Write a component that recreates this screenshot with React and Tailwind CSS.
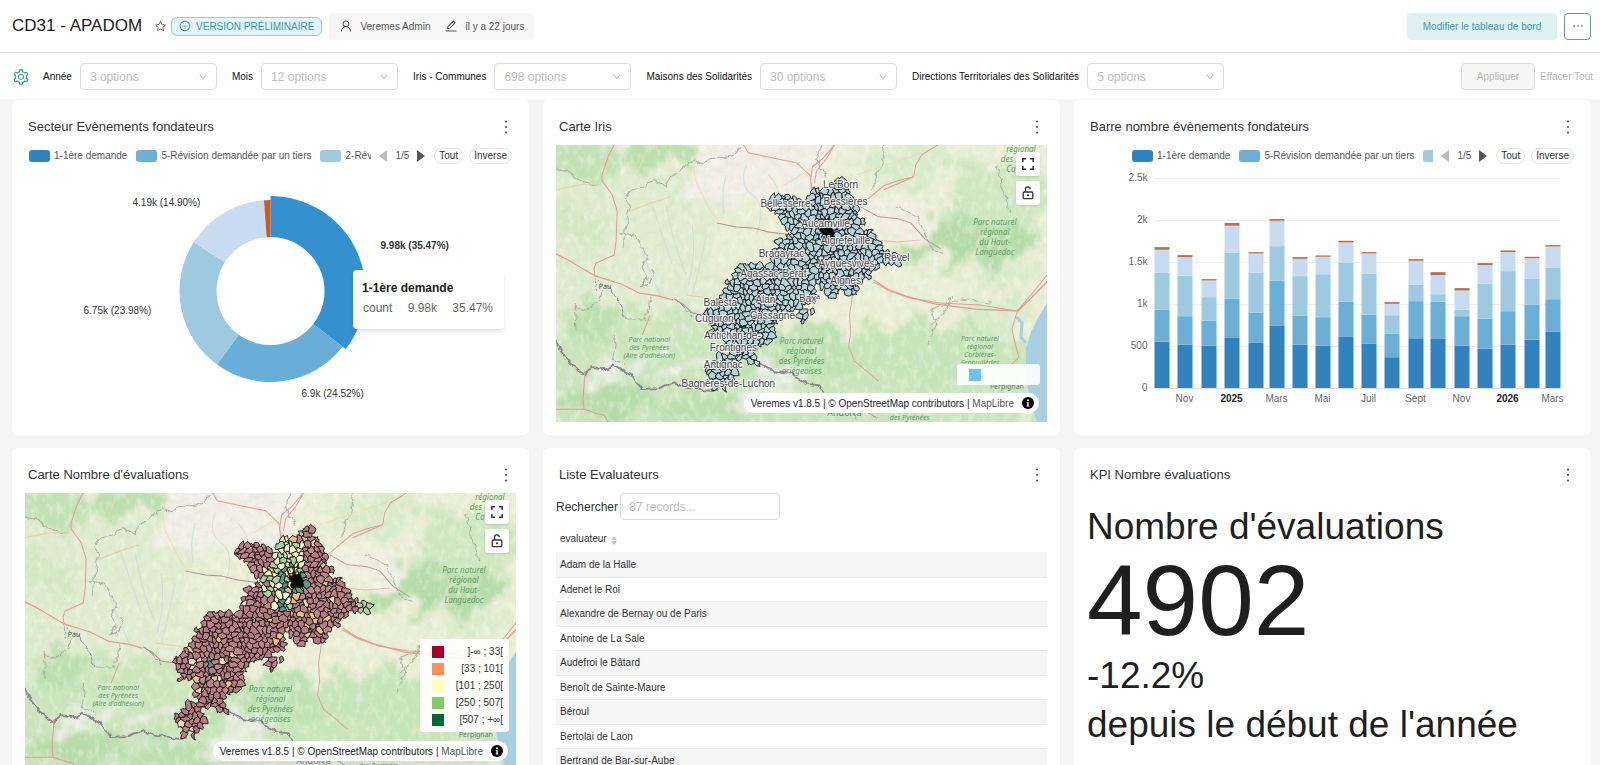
import React, { useState } from 'react';
import {
  AiOutlineStar,
  AiOutlineMinusCircle,
  AiOutlineUser,
  AiOutlineEdit,
  AiOutlineSetting,
  AiOutlineDown,
  AiOutlineEllipsis,
} from 'react-icons/ai';

const filters = [
  { id: 'annee', label: 'Année', placeholder: '3 options' },
  { id: 'mois', label: 'Mois', placeholder: '12 options' },
  { id: 'iris', label: 'Iris - Communes', placeholder: '698 options' },
  { id: 'mds', label: 'Maisons des Solidarités', placeholder: '30 options' },
  { id: 'dts', label: 'Directions Territoriales des Solidarités', placeholder: '5 options' },
];

const evaluateurs = [
  'Adam de la Halle',
  'Adenet le Roi',
  'Alexandre de Bernay ou de Paris',
  'Antoine de La Sale',
  'Audefroi le Bâtard',
  'Benoît de Sainte-Maure',
  'Béroul',
  'Bertolai de Laon',
  'Bertrand de Bar-sur-Aube',
];

const seriesColors = ['#3182bd', '#6baed6', '#9ecae1', '#c6dbef', '#b8704c'];

// cumulative totals for each stacked level
const bars = [
  { x: 67, levels: [552, 934, 1371, 1646, 1677] },
  { x: 90, levels: [517, 855, 1336, 1558, 1582], label: 'Nov' },
  { x: 114, levels: [505, 803, 1081, 1280, 1296] },
  { x: 137, levels: [596, 1061, 1614, 1932, 1964], label: '2025', bold: true },
  { x: 161, levels: [537, 898, 1371, 1602, 1618] },
  { x: 182, levels: [739, 1280, 1689, 1991, 2011], label: 'Mars' },
  { x: 205, levels: [517, 859, 1332, 1538, 1558] },
  { x: 228, levels: [505, 843, 1355, 1562, 1578], label: 'Mai' },
  { x: 251, levels: [608, 1026, 1495, 1733, 1753] },
  { x: 274, levels: [525, 875, 1363, 1602, 1618], label: 'Juil' },
  { x: 297, levels: [366, 644, 867, 1002, 1022] },
  { x: 321, levels: [592, 1034, 1228, 1515, 1534], label: 'Sept' },
  { x: 343, levels: [584, 1026, 1117, 1344, 1379] },
  { x: 367, levels: [505, 855, 934, 1161, 1189], label: 'Nov' },
  { x: 390, levels: [469, 827, 1240, 1463, 1487] },
  { x: 413, levels: [517, 914, 1391, 1618, 1638], label: '2026', bold: true },
  { x: 437, levels: [576, 990, 1304, 1546, 1562] },
  { x: 458, levels: [668, 1057, 1435, 1685, 1701], label: 'Mars' },
];

const slices = [
  { from: 0, to: 127.7, color: '#3490cf', r: 95 },
  { from: 127.7, to: 216, color: '#69aed8', r: 91 },
  { from: 216, to: 302.3, color: '#9ecae1', r: 91 },
  { from: 302.3, to: 355.9, color: '#c9dbf1', r: 91 },
  { from: 355.9, to: 360, color: '#cc5a28', r: 91 },
];

const townLabels = [
  ['Le Born', 284, 39],
  ['Bellesserre', 229, 58],
  ['Bessières', 289, 56],
  ['Aucamville', 269, 78],
  ['Aigrefeuille', 289, 95],
  ['Bragayrac', 225, 108],
  ['Revel', 340, 112],
  ['Ayguesvives', 290, 118],
  ['Agassac', 203, 128],
  ['Bérat', 238, 128],
  ['Aignes', 289, 135],
  ['Baxª', 253, 153],
  ['Alan', 209, 154],
  ['Balesta', 164, 157],
  ['Cassagne', 216, 170],
  ['Cuguron', 158, 173],
  ['Antichan-de-', 176, 190],
  ['Frontignes', 177, 202],
  ['Antignac', 167, 219],
  ['Bagnères-de-Luchon', 172, 238],
];

const parkLabels = [
  { x: 438, y: 80, step: 10, size: 8, lines: ['Parc naturel', 'régional', 'du Haut-', 'Languedoc'] },
  { x: 245, y: 199, step: 10, size: 8, lines: ['Parc naturel', 'régional', 'des Pyrénées', 'ariégeoises'] },
  { x: 93, y: 197, step: 8, size: 7, lines: ['Parc national', 'des Pyrénées', "(Aire d'adhésion)"] },
  { x: 464, y: 7, step: 10, size: 8, lines: ['régional'] },
  { x: 450, y: 17, step: 10, size: 8, lines: ['des'] },
  { x: 454, y: 27, step: 10, size: 8, lines: ['Ca'] },
  { x: 353, y: 275, step: 10, size: 7, lines: ['des Pyrénées'] },
];
const corbieres = { x: 423, y: 196, step: 8, size: 7, lines: ['Parc naturel', 'régional', 'Corbières-', 'Fenouillèdes'] };

const mapLegend = [
  { color: '#a50026', label: ']-∞ ; 33[' },
  { color: '#f4935c', label: '[33 ; 101[' },
  { color: '#ffffbf', label: '[101 ; 250[' },
  { color: '#84ca66', label: '[250 ; 507[' },
  { color: '#006837', label: '[507 ; +∞[' },
];

const mainland = [
  [222, 98], [260, 86], [308, 82], [328, 105], [344, 118], [350, 104], [354, 74], [375, 62], [395, 56],
  [415, 50], [436, 30], [456, 34], [464, 62], [476, 85], [494, 105], [502, 130], [500, 148], [520, 160], [504, 180],
  [508, 190], [545, 202], [564, 228], [592, 250], [606, 262], [625, 246], [638, 250], [634, 290], [600, 294], [580, 306],
  [564, 292], [548, 305], [532, 335], [500, 350], [490, 380], [460, 374], [430, 372], [428, 392], [405, 398],
  [398, 370], [385, 352], [372, 352], [378, 382], [380, 398], [350, 406], [344, 425], [358, 440], [342, 464],
  [320, 450], [318, 424], [300, 436], [272, 444], [252, 460], [250, 505], [236, 524], [208, 524], [194, 548],
  [200, 594], [165, 584], [118, 580], [108, 548], [96, 520], [92, 494], [72, 502], [64, 478], [36, 440],
  [54, 412], [80, 396], [86, 368], [106, 341], [136, 316], [150, 290], [200, 290], [240, 304], [250, 288],
  [250, 252], [266, 228], [298, 211], [316, 198], [296, 194], [264, 168], [256, 142], [234, 128],
];
const luchonnais = [[84, 566], [108, 570], [124, 586], [130, 620], [122, 658], [66, 660], [66, 634], [38, 620], [42, 594], [72, 592]];

const inside = (x, y, poly) => {
  let hit = false;
  for (let i = 0, j = poly.length - 1; i < poly.length; j = i++) {
    const [xi, yi] = poly[i];
    const [xj, yj] = poly[j];
    if (yi > y !== yj > y && x < ((xj - xi) * (y - yi)) / (yj - yi) + xi) hit = !hit;
  }
  return hit;
};

const noise = (a, b, s) => {
  const v = Math.sin(a * 127.1 + b * 311.7 + s * 74.7) * 43758.5453;
  return v - Math.floor(v);
};

const seed = (r, c) => [
  c * 17 + (r % 2 ? 8 : 0) + (noise(r, c, 1) - 0.5) * 21,
  r * 15 + (noise(r, c, 2) - 0.5) * 19,
];

const corner = (a, b, c) => {
  const k = a[0] + b[0] + c[0];
  const l = a[1] + b[1] + c[1];
  return [k / 3 + (noise(Math.round(k), Math.round(l), 3) - 0.5) * 6, l / 3 + (noise(Math.round(k), Math.round(l), 4) - 0.5) * 6];
};

// jagged edge, the same from both sides
const wiggle = (p, q) => {
  const mx = (p[0] + q[0]) / 2;
  const my = (p[1] + q[1]) / 2;
  const a = Math.round(mx * 10);
  const b = Math.round(my * 10);
  return [mx + (noise(a, b, 5) - 0.5) * 8, my + (noise(a, b, 6) - 0.5) * 8];
};

const classColor = (x, y, n) => {
  const d = Math.hypot(x - 395, y - 195);
  if (Math.hypot(x - 362, y - 275) < 16 || Math.hypot(x - 145, y - 440) < 9) return '#5f9a86';
  if (x > 596) return '#b3cfa0';
  if (d < 42) return n < 0.5 ? '#5f9a86' : n < 0.8 ? '#a3cfa0' : '#e9ecbe';
  if (x < 425 && x > 340 && y < 175) return n < 0.65 ? '#edf0c8' : n < 0.8 ? '#e9bd8c' : '#a9d2a2';
  if (d < 95 && x < 400 && y > 160) return n < 0.45 ? '#edf0c8' : n < 0.65 ? '#a9d2a2' : n < 0.85 ? '#e9bd8c' : '#b97f80';
  if (x > 310 && x < 480 && y > 270 && n > 0.78) return '#e9bd8c';
  return n > 0.97 ? '#edd9bb' : n > 0.94 ? '#e9bd8c' : n > 0.5 ? '#bd8587' : '#b57d80';
};

const communes = [];
for (let r = 1; r < 46; r++) {
  for (let c = 1; c < 39; c++) {
    const s = seed(r, c);
    if (!inside(s[0], s[1], mainland) && !inside(s[0], s[1], luchonnais)) continue;
    const o = r % 2 ? 1 : 0;
    const ring = [
      seed(r, c + 1),
      seed(r + 1, c + o),
      seed(r + 1, c + o - 1),
      seed(r, c - 1),
      seed(r - 1, c + o - 1),
      seed(r - 1, c + o),
    ];
    const corners = ring.map((p, i) => corner(s, p, ring[(i + 1) % 6]));
    const pts = corners.flatMap((p, i) => [p, wiggle(p, corners[(i + 1) % 6])]);
    communes.push({
      key: `${r}-${c}`,
      d: `M${pts.map((p) => `${p[0].toFixed(1)} ${p[1].toFixed(1)}`).join('L')}Z`,
      color: classColor(s[0], s[1], noise(r, c, 7)),
    });
  }
}

const arc = (cx, cy, inner, { from, to, r }) => {
  const pt = (radius, deg) => {
    const a = ((deg - 90) * Math.PI) / 180;
    return `${(cx + radius * Math.cos(a)).toFixed(2)} ${(cy + radius * Math.sin(a)).toFixed(2)}`;
  };
  return `M${pt(r, from)}A${r} ${r} 0 0 1 ${pt(r, to)}L${pt(inner, to)}A${inner} ${inner} 0 0 0 ${pt(inner, from)}Z`;
};

const Card = ({ title, children }) => (
  <section className="bg-white rounded-md px-[13px] pb-[13px] min-w-0">
    <div className="h-[45px] pt-[9px] pl-[3px] pr-1 flex items-center justify-between">
      <h2 className="text-[13px] leading-5 text-[#333]">{title}</h2>
      <button aria-label="Options" className="w-3 h-5 flex items-center justify-center">
        <svg width="4" height="14" viewBox="0 0 4 14" fill="#555">
          <circle cx="2" cy="1.5" r="1.1" />
          <circle cx="2" cy="7" r="1.1" />
          <circle cx="2" cy="12.5" r="1.1" />
        </svg>
      </button>
    </div>
    {children}
  </section>
);

const LegendItem = ({ swatch, label }) => (
  <span className="flex shrink-0 items-center gap-1">
    <span className={`w-[21px] h-3 rounded-[3px] ${swatch}`}></span>
    {label}
  </span>
);

const Legend = ({ children }) => (
  <div className="h-[22px] flex items-center text-[10px] leading-4 text-[#555] whitespace-nowrap pr-1">
    <div className="flex-1 min-w-0 overflow-hidden flex gap-[9px]">{children}</div>
    <button aria-label="Précédent" className="ml-2">
      <svg width="8" height="12" viewBox="0 0 8 12"><path d="M8 0v12L0 6z" fill="#bbb" /></svg>
    </button>
    <span className="mx-2">1/5</span>
    <button aria-label="Suivant">
      <svg width="8" height="12" viewBox="0 0 8 12"><path d="M0 0v12l8-6z" fill="#555" /></svg>
    </button>
    <button className="ml-[9px] h-4 px-1 leading-[14px] rounded-full border border-[#e4e4e4] text-[#333]">Tout</button>
    <button className="ml-1.5 h-4 px-1 leading-[14px] rounded-full border border-[#e4e4e4] text-[#333]">Inverse</button>
  </div>
);

const Donut = () => (
  <div className="relative h-[277px]">
    <Legend>
      <span className="w-1 -mr-[9px] shrink-0"></span>
      <LegendItem swatch="bg-[#3182bd]" label="1-1ère demande" />
      <LegendItem swatch="bg-[#6baed6]" label="5-Révision demandée par un tiers" />
      <LegendItem swatch="bg-[#9ecae1]" label="2-Rév" />
    </Legend>
    <svg viewBox="0 22 490 255" className="w-full h-[255px] text-[10px]" fill="#333">
      {slices.slice(1).concat(slices[0]).map((s) => (
        <path key={s.color} d={arc(245, 146, 54, s)} fill={s.color} />
      ))}
      <text x="355" y="104" fontWeight="bold">9.98k (35.47%)</text>
      <text x="107" y="61">4.19k (14.90%)</text>
      <text x="58" y="169">6.75k (23.98%)</text>
      <text x="276" y="252">6.9k (24.52%)</text>
    </svg>
    <div className="absolute left-[328px] top-[125px] w-[151px] h-[59px] bg-white rounded-sm shadow-md px-[9px] pt-2 text-[12px] leading-5">
      <div className="font-bold text-[#222]">1-1ère demande</div>
      <div className="flex justify-between text-[#666] pl-px pr-[2px]">
        <span>count</span>
        <span>9.98k</span>
        <span>35.47%</span>
      </div>
    </div>
  </div>
);

const BarChart = () => {
  const toY = (v) => 243 - (v * 210) / 2500;
  return (
    <div className="h-[277px]">
      <Legend>
        <span className="w-[45px] -mr-[9px] shrink-0"></span>
        <LegendItem swatch="bg-[#3182bd]" label="1-1ère demande" />
        <LegendItem swatch="bg-[#6baed6]" label="5-Révision demandée par un tiers" />
        <LegendItem swatch="bg-[#9ecae1]" label="" />
      </Legend>
      <svg viewBox="0 22 490 255" className="w-full h-[255px] text-[10px]" fill="#666">
        {[0, 500, 1000, 1500, 2000, 2500].map((v) => (
          <g key={v}>
            <path d={`M67 ${toY(v) + 0.5}H473`} stroke={v ? '#eeeeee' : '#dddddd'} />
            <text x="60" y={toY(v) + 3} textAnchor="end">
              {v >= 1000 ? `${v / 1000}k` : v}
            </text>
          </g>
        ))}
        {bars.map((bar) => (
          <g key={bar.x}>
            {bar.levels.map((v, i) => {
              const base = i ? bar.levels[i - 1] : 0;
              return (
                <rect key={i} x={bar.x} y={toY(v)} width="15" height={toY(base) - toY(v)} fill={seriesColors[i]} />
              );
            })}
            {bar.label && (
              <text
                x={bar.x + 7}
                y="257"
                textAnchor="middle"
                fontWeight={bar.bold ? 'bold' : 'normal'}
                fill={bar.bold ? '#222' : '#666'}
              >
                {bar.label}
              </text>
            )}
          </g>
        ))}
      </svg>
    </div>
  );
};

const BaseMap = ({ id, parks }) => (
  <>
    <defs>
      <filter id={`${id}-forest`} x="-20%" y="-20%" width="140%" height="140%">
        <feTurbulence type="fractalNoise" baseFrequency="0.04" numOctaves="5" seed="4" result="n" />
        <feDisplacementMap in="SourceGraphic" in2="n" scale="60" xChannelSelector="R" yChannelSelector="G" />
        <feGaussianBlur stdDeviation="2.5" />
      </filter>
      <filter id={`${id}-relief`} x="0" y="0" width="100%" height="100%">
        <feTurbulence type="fractalNoise" baseFrequency="0.11 0.13" numOctaves="5" seed="11" />
        <feColorMatrix values="0 0 0 0 0.5  0 0 0 0 0.74  0 0 0 0 0.45  2.8 0 0 0 -1.25" />
      </filter>
      <filter id={`${id}-light`} x="0" y="0" width="100%" height="100%">
        <feTurbulence type="fractalNoise" baseFrequency="0.16 0.09" numOctaves="4" seed="23" />
        <feColorMatrix values="0 0 0 0 0.97  0 0 0 0 0.97  0 0 0 0 0.9  0 3 0 0 -1.4" />
      </filter>
      <filter id={`${id}-rough`} x="-5%" y="-5%" width="110%" height="110%">
        <feTurbulence type="fractalNoise" baseFrequency="0.12" numOctaves="2" seed="8" result="n" />
        <feDisplacementMap in="SourceGraphic" in2="n" scale="7" xChannelSelector="R" yChannelSelector="G" />
      </filter>
    </defs>
    <rect width="490" height="277" fill="#eaeed6" />
    <g filter={`url(#${id}-forest)`} fill="#c3e1b5">
      <rect x="-20" y="30" width="150" height="190" fill="#dfebcf" />
      <rect x="60" y="60" width="110" height="110" fill="#e3ecd2" />
      <rect x="135" y="-20" width="130" height="80" fill="#f1efe6" />
      <rect x="300" y="55" width="70" height="40" fill="#f1efe2" />
      <ellipse cx="300" cy="180" rx="80" ry="22" fill="#eceed6" />
      <rect x="-20" y="195" width="500" height="100" fill="#cbe4bc" />
      <ellipse cx="30" cy="16" rx="38" ry="20" />
      <ellipse cx="100" cy="6" rx="34" ry="18" fill="#bddfae" />
      <ellipse cx="20" cy="80" rx="40" ry="18" fill="#d6e9c6" />
      <ellipse cx="425" cy="88" rx="58" ry="34" fill="#b7dcaa" />
      <ellipse cx="390" cy="108" rx="48" ry="10" fill="#b3daa6" />
      <ellipse cx="350" cy="20" rx="40" ry="22" fill="#d9ebcc" />
      <ellipse cx="445" cy="50" rx="50" ry="36" fill="#cfe8c2" />
      <ellipse cx="445" cy="128" rx="50" ry="10" fill="#dfecce" />
      <ellipse cx="90" cy="185" rx="100" ry="24" fill="#cde6be" />
      <ellipse cx="40" cy="180" rx="26" ry="20" fill="#bddfb0" />
      <ellipse cx="245" cy="205" rx="74" ry="28" fill="#c0e1b3" />
      <ellipse cx="370" cy="210" rx="80" ry="32" fill="#c6e4b9" />
      <ellipse cx="440" cy="172" rx="40" ry="18" fill="#d8ebca" />
      <ellipse cx="50" cy="258" rx="50" ry="18" fill="#b7dca9" />
      <ellipse cx="150" cy="264" rx="70" ry="12" fill="#bedfb0" />
      <ellipse cx="130" cy="220" rx="34" ry="6" fill="#eef0e8" />
      <ellipse cx="225" cy="230" rx="26" ry="8" fill="#eef0ec" />
      <ellipse cx="60" cy="226" rx="26" ry="6" fill="#e9efe2" />
      <ellipse cx="210" cy="250" rx="34" ry="9" fill="#e9eee2" />
    </g>
    <rect width="490" height="277" filter={`url(#${id}-relief)`} opacity="0.22" />
    <rect width="490" height="277" filter={`url(#${id}-light)`} opacity="0.36" />
    <path d="M490 158l-9 15-7 14-5 16v30l4 20 7 24h10z" fill="#a9cfe2" />
    <path d="M460 172l5 6-1 14 5 6" fill="none" stroke="#a9cfe2" strokeWidth="3" />
    <g fill="none" strokeLinejoin="round" filter={`url(#${id}-rough)`}>
      <path
        d="M185 0l-8 10-22 4-10 5-8-4-12 10-10 6-6 10-10-6-8 2-2 6-14 2-6 8 4 12-4 18-2 20M65 89l14 2 8 12 4 10-6 12 6 8-6 10 8-6 4-14M46 146l-2 8-14 12-12-6 2 24M58 190l2 10-4 14 12 4M70 174h20l4-22M265 0l-6 12 10 20M328 0l-3 22-6 8-3 14M370 200l10-22-6-14 30-10 30 4M0 24l14 4 12 10 14 2M340 62l20 10 14 30 14 8M395 150l-8 20-16 10M440 20l8 30 6 20"
        stroke="#9b979a"
        strokeOpacity="0.7"
      />
      <path
        d="M0 195l7 14 7 8 13 12 8-6 14 1 7-4 18 8 12 16 15-1 18-6 12 6 30 2M200 216l16 9 17 3 17 11 12 1 6 10"
        stroke="#8b858c"
        strokeWidth="1.8"
      />
      <path d="M268 250l14 12 10 0 8 12M302 262l20 12" stroke="#a59fa3" />
      <path d="M40 134l-2 12M44 134l12 12 8 14 6 14M120 154l10 10 6 8" stroke="#8f98b5" />
    </g>
    <g fill="none" stroke="#c9dbe0" strokeOpacity="0.8">
      <path d="M190 20q-8 20 6 30t4 40M170 30q-6 20-2 40M212 30q16 16 8 36M96 60q10 30 20 60M110 60q6 36 20 70M150 90q-6 30-14 60M136 80q4 30-4 60M84 100q6 20 20 50" />
    </g>
    <g fill="none" stroke="#e79a98" strokeLinejoin="round">
      <path d="M58 0l-6 12-6 18 0 6 10 14 5 16-1 30-2 14-18 8-2 6 1 8" />
      <path d="M0 109l12 6 12 7 15 9 26 8 18 9 20 3 14 4" strokeWidth="1.3" />
      <path d="M118 154l10 6 8 8 14 2" stroke="#b58f92" />
      <path d="M187 0l5 8 28 6 20 4 13 12 3 14 1 14M278 0l-12 14-10 8-2 14 2 16M278 0l-8 14-10 12-2 12" />
      <path d="M381 0l-16 10-6 10-2 12-16 4-14 5-12 10-12 10M357 32l-16 7-14 6" />
      <path d="M304 62l18 10 20 2 12 4 14 16 16 10" stroke="#b89b9e" />
      <path d="M160 78l20 4 16 1 16 4 24 3" stroke="#a98f90" />
      <path d="M310 94l30 3 24-2" strokeOpacity="0.6" />
      <path d="M317 135l14 9 18 7 30 8 40 5 42 2 14-14 16-16" strokeWidth="1.3" />
      <path d="M317 137l16 9 20 7 30 5 40 2 37 6 14-16 16-20M461 164l-6 20 3 14 4 14-8 8" />
      <path d="M296 150l-3 20 1 18-2 14 6 14 12 10 12 10" stroke="#d5a9a5" />
      <path d="M0 264h28l12 4 8 2 5 8M28 264l-1-10 2-28M20 166l-1-8M94 170l-8 20" />
      <path d="M0 45l24-5 20 0M70 68l20-8 24-8M130 150l30 4" stroke="#efc1a0" strokeOpacity="0.7" />
      <path d="M140 2l-2 24 2 12 14 28 10 12M228 40l20-12 10 8M90 6l-8 20M300 30l60-20" stroke="#f0d9ac" strokeOpacity="0.8" />
    </g>
    <g fill="#5f9f6a" fontStyle="italic" textAnchor="middle" className="font-['Noto_Sans',sans-serif]">
      {parks.map((p) =>
        p.lines.map((line, i) => (
          <text key={p.x + line} x={p.x} y={p.y + i * p.step} fontSize={p.size}>
            {line}
          </text>
        ))
      )}
    </g>
    <g fill="#777" fontSize="7" textAnchor="middle" className="font-['Noto_Sans',sans-serif]">
      <text x="49" y="144" fill="#555">Pau</text>
      <text x="450" y="244">Perpignan</text>
      <text x="288" y="271" fontSize="9">Andorra</text>
    </g>
  </>
);

const MapView = ({ id, fill, labels, children }) => (
  <div className="relative h-[277px] overflow-hidden">
    <svg viewBox="0 0 490 277" preserveAspectRatio="xMidYMid slice" className="w-full h-full">
      <BaseMap id={id} parks={labels ? [...parkLabels, corbieres] : parkLabels} />
      <g transform="translate(135 22) scale(0.3333)" stroke="#1c1517" strokeWidth="2.8" strokeLinejoin="round">
        {communes.map((c) => (
          <path key={c.key} d={c.d} fill={fill || c.color} />
        ))}
        <path
          d="M386 182l10 2 4-12 8 8 12-2 2 12 8 6-4 8 4 8-10 6-14-2-12 4-4-10 4-8-8-8z"
          fill="#0a0a0a"
        />
        <path d="M380 160l6 20M400 150l4 24M424 168l-8 14M372 205l14-4M396 222l-4 16M420 220l8 10M390 170l-8-16M410 160l2-12M430 190l10-4M386 214l-12 8" fill="none" />
      </g>
      {labels && (
        <g
          fontSize="10"
          textAnchor="middle"
          fill="#444"
          stroke="#ffffff"
          strokeOpacity="0.85"
          strokeWidth="2"
          paintOrder="stroke"
          strokeLinejoin="round"
        >
          {townLabels.map(([name, x, y]) => (
            <text key={name} x={x} y={y + 4}>
              {name}
            </text>
          ))}
        </g>
      )}
    </svg>
    <div className="absolute top-[7px] right-[7px] flex flex-col gap-[5px]">
      <button aria-label="Plein écran" className="w-6 h-6 bg-white rounded-[3px] shadow-sm flex items-center justify-center">
        <svg width="12" height="12" viewBox="0 0 12 12" fill="none" stroke="#333" strokeWidth="1.5">
          <path d="M0.800 4V0.800H4M8 0.800h3.200V4M11.200 8v3.200H8M4 11.200H0.800V8" />
        </svg>
      </button>
      <button aria-label="Verrouiller" className="w-6 h-6 bg-white rounded-[3px] shadow-sm flex items-center justify-center">
        <svg width="12" height="14" viewBox="0 0 12 14" fill="none" stroke="#333" strokeWidth="1.3">
          <rect x="1.200" y="6" width="9.600" height="6.600" rx="1.200" />
          <path d="M3.500 6V3.400a2.400 2.400 0 0 1 4.800-.2" />
          <circle cx="6" cy="9.300" r="0.500" fill="#333" />
        </svg>
      </button>
    </div>
    {children}
    <div className="absolute right-2 bottom-[9px] h-5 rounded-[10px] bg-white flex items-center pl-[7px] pr-[5px] text-[10px] text-[#222] whitespace-nowrap">
      <span>
        Veremes v1.8.5 | © <a href="#osm">OpenStreetMap contributors</a> |{' '}
        <a href="#maplibre" className="text-[#555]">MapLibre</a>
      </span>
      <svg width="12" height="12" viewBox="0 0 12 12" className="ml-2">
        <circle cx="6" cy="6" r="6" fill="#000" />
        <circle cx="6" cy="3.200" r="1" fill="#fff" />
        <path d="M4.700 5.200h2v3.300h.7v1H4.600v-1h.7V6.200h-.6z" fill="#fff" />
      </svg>
    </div>
  </div>
);

const App = () => {
  const [search, setSearch] = useState('');

  const rows = evaluateurs.filter((name) => name.toLowerCase().includes(search.toLowerCase()));

  return (
    <div className="h-screen flex flex-col bg-[#f5f5f5] text-[#333] font-['Liberation_Sans',Arial,sans-serif]">
      {/* Header */}
      <header className="h-[53px] shrink-0 bg-white border-b border-[#e0e0e0] pl-3 pr-[9px] flex items-center text-[10px]">
        <h1 className="text-[17px] text-[#222] whitespace-nowrap">CD31 - APADOM</h1>
        <button aria-label="Favori" className="ml-3 mr-1 text-[#777]">
          <AiOutlineStar size={13} />
        </button>
        <span className="h-[19px] px-[7px] flex items-center gap-[5px] rounded-md border border-[#94cdd6] bg-[#e4f4f7] text-[#3a97ab]">
          <AiOutlineMinusCircle size={12} />
          VERSION PRÉLIMINAIRE
        </span>
        <div className="ml-[7px] h-[27px] px-[10px] rounded bg-[#f6f6f6] flex items-center text-[#555]">
          <AiOutlineUser size={14} />
          <span className="ml-[7px]">Veremes Admin</span>
          <AiOutlineEdit size={14} className="ml-[14px]" />
          <span className="ml-[7px]">il y a 22 jours</span>
        </div>
        <button className="ml-auto w-[150px] h-[27px] rounded bg-[#e0f1f3] text-[#4597ad]">Modifier le tableau de bord</button>
        <button aria-label="Plus" className="ml-[7px] w-[27px] h-[27px] rounded border border-[#5b9a9e] text-[#444] flex items-center justify-center">
          <AiOutlineEllipsis size={14} />
        </button>
      </header>

      {/* Filters */}
      <div className="h-[46px] shrink-0 bg-white pl-3 pr-[7px] pt-px flex items-center text-[10px] whitespace-nowrap">
        <button aria-label="Paramètres" className="mr-[13px] text-[#3a97a8]">
          <AiOutlineSetting size={18} />
        </button>
        <div className="flex items-center gap-[15px]">
          {filters.map((f) => (
            <div key={f.id} className="flex items-center gap-2">
              <label htmlFor={f.id} className="text-[#111]">{f.label}</label>
              <div className="relative">
                <select
                  id={f.id}
                  className="appearance-none w-[137px] h-[27px] rounded border border-[#dcdcdc] bg-white pl-[9px] pr-6 text-[12px] text-[#bdbdbd]"
                >
                  <option>{f.placeholder}</option>
                </select>
                <AiOutlineDown size={10} className="absolute right-[9px] top-[9px] text-[#aaa] pointer-events-none" />
              </div>
            </div>
          ))}
        </div>
        <button disabled className="ml-auto w-[74px] h-[27px] rounded border border-[#dcdcdc] bg-[#f5f5f5] text-[#b5b5b5]">
          Appliquer
        </button>
        <button disabled className="ml-[5px] text-[#b5b5b5]">Effacer Tout</button>
      </div>

      {/* Dashboard grid */}
      <main className="flex-1 min-h-0 overflow-y-auto [scrollbar-width:none]">
        <div className="grid grid-cols-3 gap-x-[14px] gap-y-[13px] pt-px pl-3 pr-[9px] pb-3">
          <Card title="Secteur Evènements fondateurs">
            <Donut />
          </Card>

          <Card title="Carte Iris">
            <MapView id="iris-map" fill="#b3d5da" labels>
              <div className="absolute right-[7px] bottom-[37px] w-[83px] h-[21px] rounded-[3px] bg-white/90 flex items-center pl-3">
                <span className="w-3 h-3 bg-[#6cc4ee]"></span>
              </div>
            </MapView>
          </Card>

          <Card title="Barre nombre évènements fondateurs">
            <BarChart />
          </Card>

          <Card title="Carte Nombre d'évaluations">
            <MapView id="eval-map">
              <ul className="absolute right-[7px] bottom-[38px] w-[89px] rounded-[3px] bg-white/90 py-1 pl-3 pr-1.5 text-[10px] leading-[17px]">
                {mapLegend.map((item) => (
                  <li key={item.label} className="flex items-center justify-between">
                    <span className="w-3 h-3" style={{ backgroundColor: item.color }}></span>
                    {item.label}
                  </li>
                ))}
              </ul>
            </MapView>
          </Card>

          <Card title="Liste Evaluateurs">
            <div className="flex items-center gap-[2px] text-[12px]">
              <label htmlFor="search">Rechercher</label>
              <input
                id="search"
                value={search}
                onChange={(e) => setSearch(e.target.value)}
                placeholder="87 records..."
                className="w-40 h-[27px] rounded border border-[#dcdcdc] px-2 placeholder:text-[#bdbdbd]"
              />
            </div>
            <table className="mt-[6px] w-full text-[10px] text-left">
              <thead>
                <tr>
                  <th className="h-[26px] pl-1 pb-[2px] font-normal">
                    <span className="flex items-center gap-1">
                      evaluateur
                      <svg width="6" height="9" viewBox="0 0 6 9" className="mt-1" fill="#c4c4c4">
                        <path d="M0 4l3-4 3 4zM0 5l3 4 3-4z" />
                      </svg>
                    </span>
                  </th>
                </tr>
              </thead>
              <tbody>
                {rows.map((name) => (
                  <tr key={name} className="h-6 odd:h-[25px] odd:bg-[#f5f5f5] border-b border-[#eaeaea]">
                    <td className="pl-1">{name}</td>
                  </tr>
                ))}
              </tbody>
            </table>
          </Card>

          <Card title="KPI Nombre évaluations">
            <div className="pt-[9px] text-[37px] leading-[49px] text-[#1f1f1f] whitespace-nowrap">
              <p>Nombre d'évaluations</p>
              <p className="text-[100px] leading-[98px] mb-[2px]">4902</p>
              <p>-12.2%</p>
              <p>depuis le début de l'année</p>
            </div>
          </Card>
        </div>
      </main>
    </div>
  );
};

export default App;
